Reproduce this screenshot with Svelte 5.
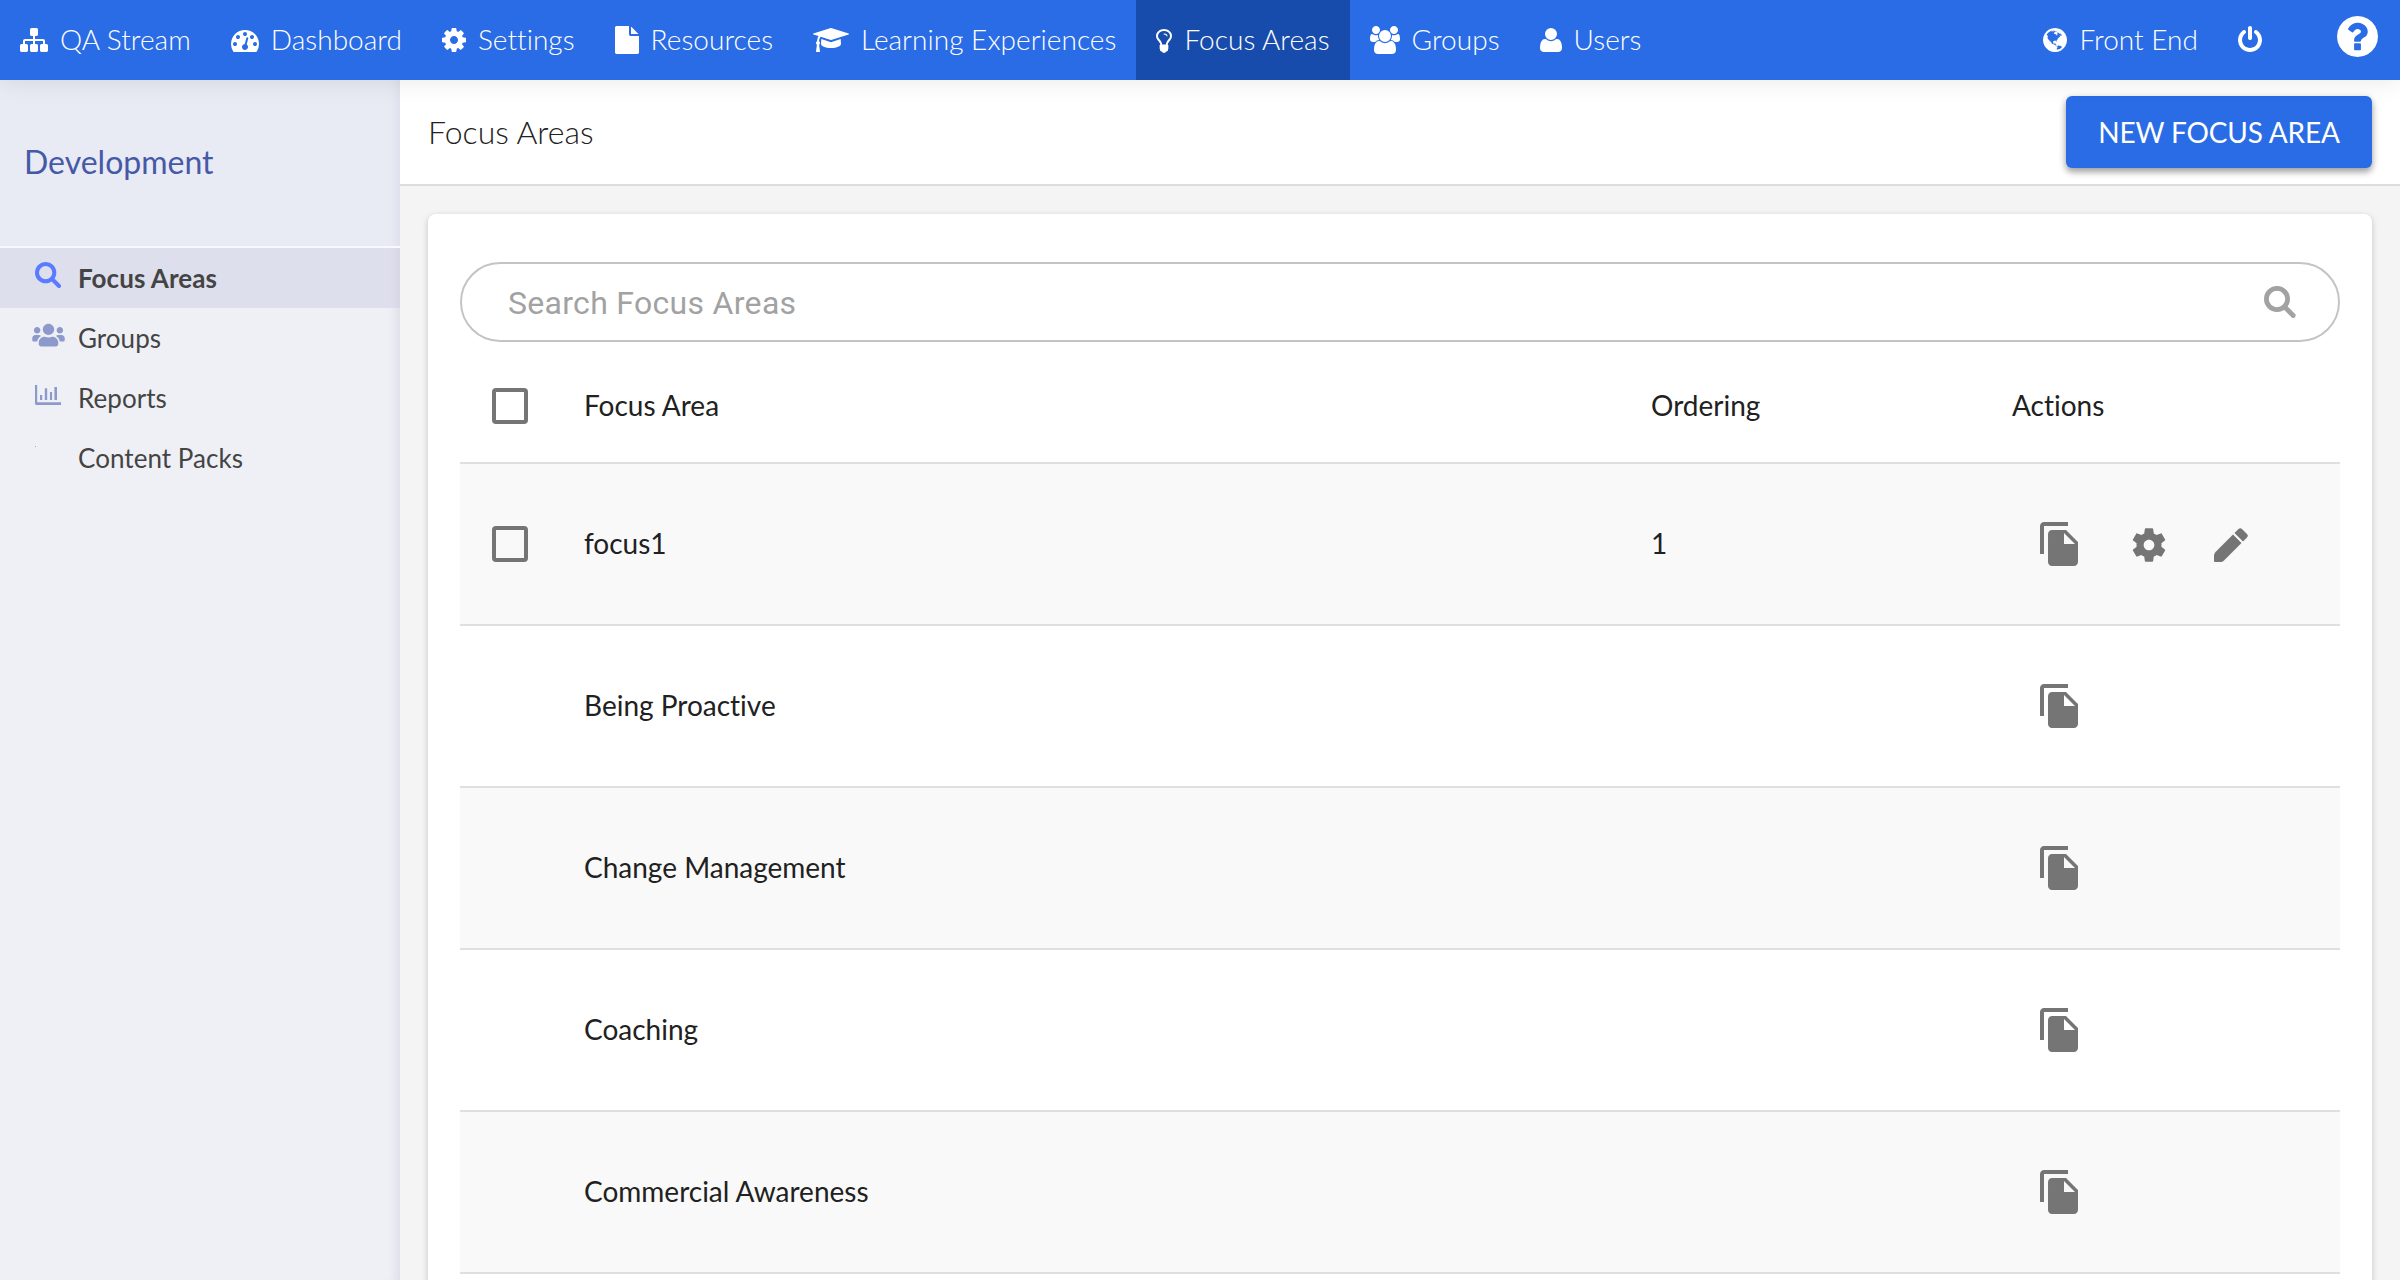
<script>
  const nav = [
    { label: 'QA Stream', icon: 'sitemap' },
    { label: 'Dashboard', icon: 'dashboard' },
    { label: 'Settings', icon: 'cog' },
    { label: 'Resources', icon: 'file' },
    { label: 'Learning Experiences', icon: 'cap' },
    { label: 'Focus Areas', icon: 'bulb', active: true },
    { label: 'Groups', icon: 'users' },
    { label: 'Users', icon: 'user' },
  ];

  // Each icon: viewBox, drawn width and height, path data; `stroke` marks outline icons and gives their line width
  const icons = {
    sitemap: { box: '0 0 1792 1792', w: 28, h: 28, d: 'M1792 1248v320q0 40-28 68t-68 28h-320q-40 0-68-28t-28-68v-320q0-40 28-68t68-28h96v-192h-512v192h96q40 0 68 28t28 68v320q0 40-28 68t-68 28h-320q-40 0-68-28t-28-68v-320q0-40 28-68t68-28h96v-192h-512v192h96q40 0 68 28t28 68v320q0 40-28 68t-68 28h-320q-40 0-68-28t-28-68v-320q0-40 28-68t68-28h96v-192q0-52 38-90t90-38h512v-192h-96q-40 0-68-28t-28-68v-320q0-40 28-68t68-28h320q40 0 68 28t28 68v320q0 40-28 68t-68 28h-96v192h512q52 0 90 38t38 90v192h96q40 0 68 28t28 68z' },
    dashboard: { box: '0 0 1792 1792', w: 28, h: 28, d: 'M384 1152q0-53-37.5-90.5t-90.5-37.5-90.5 37.5-37.5 90.5 37.5 90.5 90.5 37.5 90.5-37.5 37.5-90.5zm192-448q0-53-37.5-90.5t-90.5-37.5-90.5 37.5-37.5 90.5 37.5 90.5 90.5 37.5 90.5-37.5 37.5-90.5zm428 481l101-382q6-26-7.5-48.5t-38.5-29.5-48 6.5-30 39.5l-101 382q-60 5-107 43.5t-63 98.5q-20 77 20 146t117 89 146-20 89-117q16-60-6-117t-72-91zm660-33q0-53-37.5-90.5t-90.5-37.5-90.5 37.5-37.5 90.5 37.5 90.5 90.5 37.5 90.5-37.5 37.5-90.5zm-640-640q0-53-37.5-90.5t-90.5-37.5-90.5 37.5-37.5 90.5 37.5 90.5 90.5 37.5 90.5-37.5 37.5-90.5zm448 192q0-53-37.5-90.5t-90.5-37.5-90.5 37.5-37.5 90.5 37.5 90.5 90.5 37.5 90.5-37.5 37.5-90.5zm320 448q0 261-141 483-19 29-54 29h-1402q-35 0-54-29-141-221-141-483 0-182 71-348t191-286 286-191 348-71 348 71 286 191 191 286 71 348z' },
    cog: { box: '128 0 1536 1792', w: 24, h: 28, d: 'M1152 896q0-106-75-181t-181-75-181 75-75 181 75 181 181 75 181-75 75-181zm512-109v222q0 12-8 23t-20 13l-185 28q-19 54-39 91 35 50 107 138 10 12 10 25t-9 23q-27 37-99 108t-94 71q-12 0-26-9l-138-108q-44 23-91 38-16 136-29 186-7 28-36 28h-222q-14 0-24.5-8.5t-11.5-21.5l-28-184q-49-16-90-37l-141 107q-10 9-25 9-14 0-25-11-126-114-165-168-7-10-7-23 0-12 8-23 15-21 51-66.5t54-70.5q-27-50-41-99l-183-27q-13-2-21-12.5t-8-23.5v-222q0-12 8-23t19-13l186-28q14-46 39-92-40-57-107-138-10-12-10-24 0-10 9-23 26-36 98.5-107.5t94.5-71.5q13 0 26 10l138 107q44-23 91-38 16-136 29-186 7-28 36-28h222q14 0 24.5 8.5t11.5 21.5l28 184q49 16 90 37l142-107q9-9 24-9 13 0 25 10 129 119 165 170 7 8 7 22 0 12-8 23-15 21-51 66.5t-54 70.5q26 50 41 98l183 28q13 2 21 12.5t8 23.5z' },
    file: { box: '128 0 1536 1792', w: 24, h: 28, d: 'M1152 512v-472q22 14 36 28l408 408q14 14 28 36h-472zm-128 32q0 40 28 68t68 28h544v1056q0 40-28 68t-68 28h-1344q-40 0-68-28t-28-68v-1600q0-40 28-68t68-28h800v544z' },
    cap: { box: '0 0 2304 1792', w: 36, h: 28, d: 'M1774 836l18 316q4 69-82 128t-235 93.5-323 34.5-323-34.5-235-93.5-82-128l18-316 574 181q22 7 48 7t48-7zm530-324q0 23-22 31l-1120 352q-4 1-10 1t-10-1l-652-206q-43 34-71 111.5t-34 178.5q63 36 63 109 0 69-58 107l58 433q2 14-8 25-9 11-24 11h-192q-15 0-24-11-10-11-8-25l58-433q-58-38-58-107 0-73 65-111 11-207 98-330l-333-104q-22-8-22-31t22-31l1120-352q4-1 10-1t10 1l1120 352q22 8 22 31z' },
    bulb: { box: '384 0 1024 1792', w: 16, h: 28, d: 'M1120 640q0 13-9.5 22.5t-22.5 9.5-22.5-9.5-9.5-22.5q0-46-54-71t-106-25q-13 0-22.5-9.5t-9.5-22.5 9.5-22.5 22.5-9.5q50 0 99.5 16t87 54 37.5 90zm160 0q0-72-34.5-134t-90-101.5-123-62-136.5-22.5-136.5 22.5-123 62-90 101.5-34.5 134q0 101 68 180 10 11 30.5 33t30.5 33q128 153 141 298h228q13-145 141-298 10-11 30.5-33t30.5-33q68-79 68-180zm128 0q0 155-103 268-45 49-74.5 87t-59.5 95.5-34 107.5q47 28 47 82 0 37-25 64 25 27 25 64 0 52-45 81 13 23 13 47 0 46-31.5 71t-77.5 25q-20 44-60 70t-87 26-87-26-60-70q-46 0-77.5-25t-31.5-71q0-24 13-47-45-29-45-81 0-37 25-64-25-27-25-64 0-54 47-82-4-50-34-107.5t-59.5-95.5-74.5-87q-103-113-103-268 0-99 44.5-184.5t117-142 164-89 186.5-32.5 186.5 32.5 164 89 117 142 44.5 184.5z' },
    users: { box: '0 0 1920 1792', w: 30, h: 28, d: 'M593 896q-162 5-265 128h-134q-82 0-138-40.5t-56-118.5q0-353 124-353 6 0 43.5 21t97.5 42.5 119 21.5q67 0 133-23-5 37-5 66 0 139 81 256zm1071 637q0 120-73 189.5t-194 69.5h-874q-121 0-194-69.5t-73-189.5q0-53 3.5-103.5t14-109 26.5-108.5 43-97.5 62-81 85.5-53.5 111.5-20q10 0 43 21.5t73 48 107 48 135 21.5 135-21.5 107-48 73-48 43-21.5q61 0 111.5 20t85.5 53.5 62 81 43 97.5 26.5 108.5 14 109 3.5 103.5zm-1024-1277q0 106-75 181t-181 75-181-75-75-181 75-181 181-75 181 75 75 181zm704 384q0 159-112.5 271.5t-271.5 112.5-271.5-112.5-112.5-271.5 112.5-271.5 271.5-112.5 271.5 112.5 112.5 271.5zm576 225q0 78-56 118.5t-138 40.5h-134q-103-123-265-128 81-117 81-256 0-29-5-66 66 23 133 23 59 0 119-21.5t97.5-42.5 43.5-21q124 0 124 353zm-128-609q0 106-75 181t-181 75-181-75-75-181 75-181 181-75 181 75 75 181z' },
    user: { box: '192 128 1408 1792', w: 22, h: 28, d: 'M1600 1533q0 120-73 189.500t-194 69.500h-874q-121 0-194-69.500t-73-189.500q0-53 3.500-103.500t14-109 26.500-108.500 43-97.500 62-81 85.500-53.500 111.500-20q10 0 43 21.500t73 48 107 48 135 21.500 135-21.500 107-48 73-48 43-21.500q61 0 111.500 20t85.500 53.500 62 81 43 97.500 26.500 108.500 14 109 3.500 103.500zm-320-893q0 159-112.500 271.500t-271.500 112.500-271.500-112.500-112.500-271.500 112.500-271.500 271.500-112.500 271.500 112.500 112.500 271.500z' },
    globe: { box: '128 0 1536 1792', w: 24, h: 28, d: 'M896 128q209 0 385.5 103t279.5 279.5 103 385.5-103 385.5-279.5 279.5-385.5 103-385.5-103-279.5-279.5-103-385.5 103-385.5 279.5-279.5 385.5-103zm274 521q-2 1-9.5 9.5t-13.5 9.5q2 0 4.5-5t5-11 3.5-7q6-7 22-15 14-6 52-12 34-8 51 11-2-2 9.5-13t14.5-12q3-2 15-4.5t15-7.5l2-22q-12 1-17.5-7t-6.5-21q0 2-6 8 0-7-4.5-8t-11.5 1-9 1q-10-3-15-7.5t-8-16.5-4-15q-2-5-9.5-11t-9.5-10q-1-2-2.5-5.5t-3-6.5-4-5.5-5.5-2.5-7 5-7.5 10-4.5 5q-3-2-6-1.5t-4.5 1-4.5 3-5 3.5q-3 2-8.5 3t-8.5 2q15-5-1-11-10-4-16-3 9-4 7.5-12t-8.5-14h5q-1-4-8.5-8.5t-17.5-8.5-13-6q-8-5-34-9.5t-33-.5q-5 6-4.5 10.5t4 14 3.5 12.5q1 6-5.5 13t-6.5 12q0 7 14 15.5t10 21.5q-3 8-16 16t-16 12q-5 8-1.5 18.5t10.5 16.5q2 2 1.5 4t-3.5 4.5-5.5 4-6.5 3.5l-3 2q-11 5-20.5-6t-13.5-26q-7-25-16-30-23-8-29 1-5-13-41-26-25-9-58-4 6-1 0-15-7-15-19-12 3-6 4-17.5t1-13.5q3-13 12-23 1-1 7-8.5t9.5-13.5.5-6q35 4 50-11 5-5 11.5-17t10.5-17q9-6 14-5.5t14.5 5.5 14.5 5q14 1 15.5-11t-7.5-20q12 1 3-17-4-7-8-9-12-4-27 5-8 4 2 8-1-1-9.5 10.5t-16.5 17.5-16-5q-1-1-5.5-13.5t-9.5-13.5q-8 0-16 15 3-8-11-15t-24-8q19-12-8-27-7-4-20.5-5t-19.5 4q-5 7-5.5 11.5t5 8 10.5 5.5 11.5 4 8.5 3q14 10 8 14-2 1-8.5 3.5t-11.5 4.5-6 4q-3 4 0 14t-2 14q-5-5-9-17.5t-7-16.5q7 9-25 6l-10-1q-4 0-16 2t-20.5 1-13.5-8q-4-8 0-20 1-4 4-2-4-3-11-9.5t-10-8.5q-46 15-94 41 6 1 12-1 5-2 13-6.5t10-5.5q34-14 42-7l5-5q14 16 20 25-7-4-30-1-20 6-22 12 7 12 5 18-4-3-11.5-10t-14.5-11-15-5q-16 0-22 1-146 80-235 222 7 7 12 8 4 1 5 9t2.5 11 11.5-3q9 8 3 19 1-1 44 27 19 17 21 21 3 11-10 18-1-2-9-9t-9-4q-3 5 .5 18.5t10.5 12.5q-7 0-9.5 16t-2.5 35.5-1 23.5l2 1q-3 12 5.5 34.5t21.5 19.5q-13 3 20 43 6 8 8 9 3 2 12 7.5t15 10 10 10.5q4 5 10 22.5t14 23.5q-2 6 9.5 20t10.5 23q-1 0-2.5 1t-2.5 1q3 7 15.5 14t15.5 13q1 3 2 10t3 11 8 2q2-20-24-62-15-25-17-29-3-5-5.5-15.5t-4.5-14.5q2 0 6 1.5t8.5 3.5 7.5 4 2 3q-3 7 2 17.5t12 18.5 17 19 12 13q6 6 14 19.5t0 13.5q9 0 20 10.5t17 19.5q5 8 8 26t5 24q2 7 8.5 13.5t12.5 9.5l16 8 13 7q5 2 18.5 10.5t21.5 11.5q10 4 16 4t14.5-2.5 13.5-3.5q15-2 29 15t21 21q36 19 55 11-2 1 .5 7.5t8 15.5 9 14.5 5.5 8.5q5 6 18 15t18 15q6-4 7-9-3 8 7 20t18 10q14-3 14-32-31 15-49-18 0-1-2.5-5.5t-4-8.5-2.5-8.5 0-7.5 5-3q9 0 10-3.5t-2-12.5-4-13q-1-8-11-20t-12-15q-5 9-16 8t-16-9q0 1-1.5 5.5t-1.5 6.5q-13 0-15-1 1-3 2.5-17.5t3.5-22.5q1-4 5.5-12t7.5-14.5 4-12.5-4.5-9.5-17.5-2.5q-19 1-26 20-1 3-3 10.5t-5 11.5-9 7q-7 3-24 2t-24-5q-13-8-22.5-29t-9.5-37q0-10 2.5-26.5t3-25-5.5-24.5q3-2 9-9.5t10-10.5q2-1 4.5-1.5t4.5 0 4-1.5 3-6q-1-1-4-3-3-3-4-3 7 3 28.5-1.5t27.5 1.5q15 11 22-2 0-1-2.5-9.5t-.5-13.5q5 27 29 9 3 3 15.5 5t17.5 5q3 2 7 5.5t5.5 4.5 5-.5 8.5-6.5q10 14 12 24 11 40 19 44 7 3 11 2t4.5-9.5 0-14-1.5-12.5l-1-8v-18l-1-8q-15-3-18.5-12t1.5-18.5 15-18.5q1-1 8-3.5t15.5-6.5 12.5-8q21-19 15-35 7 0 11-9-1 0-5-3t-7.5-5-4.5-2q9-5 2-16 5-3 7.5-11t7.5-10q9 12 21 2 7-8 1-16 5-7 20.5-10.5t18.5-9.5q7 2 8-2t1-12 3-12q4-5 15-9t13-5l17-11q3-4 0-4 18 2 31-11 10-11-6-20 3-6-3-9.5t-15-5.5q3-1 11.5-.5t10.5-1.5q15-10-7-16-17-5-43 12zm-163 877q206-36 351-189-3-3-12.5-4.5t-12.5-3.5q-18-7-24-8 1-7-2.5-13t-8-9-12.5-8-11-7q-2-2-7-6t-7-5.5-7.5-4.5-8.5-2-10 1l-3 1q-3 1-5.5 2.5t-5.5 3-4 3 0 2.5q-21-17-36-22-5-1-11-5.5t-10.5-7-10-1.5-11.5 7q-5 5-6 15t-2 13q-7-5 0-17.5t2-18.5q-3-6-10.5-4.5t-12 4.5-11.5 8.5-9 6.5-8.5 5.5-8.5 7.5q-3 4-6 12t-5 11q-2-4-11.5-6.5t-9.5-5.5q2 10 4 35t5 38q7 31-12 48-27 25-29 40-4 22 12 26 0 7-8 20.5t-7 21.5q0 6 2 16z' },
    power: { box: '128 0 1536 1792', w: 24, h: 28, d: 'M1664 896q0 156-61 298t-164 245-245 164-298 61-298-61-245-164-164-245-61-298q0-182 80.5-343t226.5-270q43-32 95.5-25t83.5 50q32 42 24.5 94.5t-49.5 84.5q-98 74-151.5 181t-53.5 228q0 104 40.5 198.5t109.5 163.5 163.5 109.5 198.5 40.5 198.5-40.5 163.5-109.5 109.5-163.5 40.5-198.5q0-121-53.5-228t-151.5-181q-42-32-49.5-84.5t24.5-94.5q31-43 84-50t95 25q146 109 226.5 270t80.5 343zm-640-768v640q0 52-38 90t-90 38-90-38-38-90v-640q0-52 38-90t90-38 90 38 38 90z' },
    help: { box: '128 128 1536 1536', w: 41, h: 41, d: 'M1024 1376v-192q0-14-9-23t-23-9h-192q-14 0-23 9t-9 23v192q0 14 9 23t23 9h192q14 0 23-9t9-23zm256-672q0-88-55.5-163t-138.5-116-170-41q-243 0-371 213-15 24 8 42l132 100q7 6 19 6 16 0 25-12 53-68 86-92 34-24 86-24 48 0 85.5 26t37.5 59q0 38-20 61t-68 45q-63 28-115.5 86.5t-52.5 125.5v36q0 14 9 23t23 9h192q14 0 23-9t9-23q0-19 21.5-49.5t54.5-49.5q32-18 49-28.5t46-35 44.5-48 28-60.5 12.5-81zm384 192q0 209-103 385.5t-279.5 279.5-385.5 103-385.5-103-279.5-279.5-103-385.5 103-385.5 279.5-279.5 385.5-103 385.5 103 279.5 279.5 103 385.5z' },
    sideSearch: { box: '0 0 26 26', w: 26, h: 26, stroke: 4, d: 'M19.300 10.650a8.650 8.650 0 1 1-17.300 0a8.650 8.650 0 1 1 17.300 0zM17 17L24 24' },
    sideGroups: { box: '0 0 640 512', w: 33, h: 26, d: 'M96 224c35.3 0 64-28.7 64-64s-28.7-64-64-64-64 28.7-64 64 28.7 64 64 64zm448 0c35.3 0 64-28.7 64-64s-28.7-64-64-64-64 28.7-64 64 28.7 64 64 64zm32 32h-64c-17.6 0-33.5 7.1-45.1 18.6 40.3 22.1 68.9 62 75.1 109.4h66c17.7 0 32-14.3 32-32v-32c0-35.3-28.7-64-64-64zm-256 0c61.9 0 112-50.1 112-112S381.9 32 320 32 208 82.1 208 144s50.1 112 112 112zm76.8 32h-8.3c-20.8 10-43.9 16-68.5 16s-47.6-6-68.5-16h-8.3C179.600 288 128 339.600 128 403.200V432c0 26.500 21.500 48 48 48h288c26.500 0 48-21.500 48-48v-28.800c0-63.600-51.600-115.200-115.200-115.200zm-223.700-13.400C161.500 263.100 145.600 256 128 256H64c-35.300 0-64 28.700-64 64v32c0 17.700 14.300 32 32 32h65.900c6.300-47.400 34.900-87.300 75.200-109.400z' },
    sideReports: { box: '0 0 26 26', w: 26, h: 26, d: 'M0 3h2.200v17.300h23.800V23H1.500Q0 23 0 21.500zM5 13h2.200v5H5zM9.800 6.300h2.400V18h-2.400zM14.900 10h2.200v8h-2.200zM19.400 5h2.600v13h-2.600z' },
    search: { box: '0 0 32 32', w: 32, h: 32, stroke: 4.8, d: 'M23.600 13a10.600 10.600 0 1 1-21.200 0a10.600 10.600 0 1 1 21.200 0zM21.500 21.800L29.200 29.500' },
    copy: { box: '0 0 24 24', w: 48, h: 48, d: 'M16 1H4c-1.1 0-2 .9-2 2v14h2V3h12V1zm-1 4l6 6v10c0 1.1-.9 2-2 2H7.990C6.890 23 6 22.100 6 21l.01-14c0-1.1.89-2 1.990-2h7zm-1 7h5.500L14 6.500V12z' },
    gear: { box: '0 0 24 24', w: 40, h: 40, d: 'M19.430 12.980c.04-.32.07-.64.07-.98s-.03-.66-.07-.98l2.110-1.650c.19-.15.24-.42.12-.64l-2-3.460c-.12-.22-.39-.3-.61-.22l-2.490 1c-.52-.4-1.080-.73-1.690-.98l-.38-2.650C14.460 2.180 14.250 2 14 2h-4c-.25 0-.46.18-.49.42l-.38 2.650c-.61.25-1.170.59-1.690.98l-2.490-1c-.23-.09-.49 0-.61.22l-2 3.460c-.13.22-.07.49.12.64l2.110 1.650c-.04.32-.07.65-.07.98s.03.66.07.98l-2.110 1.650c-.19.15-.24.42-.12.64l2 3.460c.12.22.39.3.61.22l2.490-1c.52.4 1.080.73 1.690.98l.38 2.650c.03.24.24.42.49.42h4c.25 0 .46-.18.49-.42l.38-2.650c.61-.25 1.170-.59 1.690-.98l2.490 1c.23.09.49 0 .61-.22l2-3.460c.12-.22.07-.49-.12-.64l-2.110-1.650zM12 15.200c-1.770 0-3.200-1.430-3.200-3.200s1.430-3.200 3.200-3.200 3.200 1.430 3.200 3.200-1.430 3.200-3.200 3.200z' },
    pencil: { box: '0 0 34 34', w: 34, h: 34, d: 'M19 6.500L27.500 15 10 32.500Q8.500 34 6.500 34H1Q0 34 0 33V27.500Q0 25.500 1.500 24zM20.500 5L24.500 1Q26.300-.5 28 1L33 6Q34.700 7.800 33 9.500L29 13.500z' },
  };

  const side = [
    { label: 'Focus Areas', icon: 'sideSearch', active: true },
    { label: 'Groups', icon: 'sideGroups' },
    { label: 'Reports', icon: 'sideReports' },
    { label: 'Content Packs', icon: '' },
  ];

  const rows = [
    { name: 'focus1', order: '1', own: true },
    { name: 'Being Proactive' },
    { name: 'Change Management' },
    { name: 'Coaching' },
    { name: 'Commercial Awareness' },
    { name: '' },
  ];
</script>

{#snippet icon(name)}
  <svg class="icon" class:outline={icons[name].stroke} viewBox={icons[name].box} width={icons[name].w} height={icons[name].h} stroke-width={icons[name].stroke} aria-hidden="true"><path d={icons[name].d} /></svg>
{/snippet}

<div class="app">
  <header class="topbar">
    {#each nav as item}
      <a class="nav-item" class:active={item.active}>{@render icon(item.icon)}<span>{item.label}</span></a>
    {/each}
    <div class="right">
      <a class="nav-item">{@render icon('globe')}<span>Front End</span></a>
      <a class="nav-item power">{@render icon('power')}</a>
      <a class="help">{@render icon('help')}</a>
    </div>
  </header>

  <div class="body">
    <aside class="sidebar">
      <div class="side-title">Development</div>
      <nav>
        {#each side as item}
          <a class="side-item" class:active={item.active}>
            <span class="side-icon">{#if item.icon}{@render icon(item.icon)}{:else}<i class="dot"></i>{/if}</span>
            <span>{item.label}</span>
          </a>
        {/each}
      </nav>
    </aside>

    <main>
      <div class="page-head">
        <h1>Focus Areas</h1>
        <button class="primary">NEW FOCUS AREA</button>
      </div>
      <section class="card">
        <div class="search">
          <span>Search Focus Areas</span>
          {@render icon('search')}
        </div>
        <div class="row head">
          <span class="check"></span>
          <span>Focus Area</span>
          <span>Ordering</span>
          <span>Actions</span>
        </div>
        {#each rows as row, i}
          <div class="row" class:odd={i % 2 === 0}>
            {#if row.own}<span class="check"></span>{:else}<span></span>{/if}
            <span class="cell">{row.name}</span>
            <span class="cell">{row.order ?? ''}</span>
            <span class="actions">
              {@render icon('copy')}
              {#if row.own}
                {@render icon('gear')}
                {@render icon('pencil')}
              {/if}
            </span>
          </div>
        {/each}
      </section>
    </main>
  </div>
</div>

<style>
  :global(body) { margin: 0; overflow: hidden; }
  .app { width: 2400px; height: 1280px; overflow: hidden; display: flex; flex-direction: column; font-family: Lato, sans-serif; font-variant-ligatures: none; background: #f4f4f4; }
  .icon { display: block; flex: none; fill: currentColor; }
  .icon.outline { fill: none; stroke: currentColor; stroke-linecap: round; }
  .topbar { position: relative; z-index: 3; flex: none; height: 80px; display: flex; background: #2a6ce6; color: #fff; box-shadow: 0 0 24px rgba(0, 0, 0, 0.1); }
  .nav-item { display: flex; align-items: center; gap: 12px; padding: 0 20px; font-size: 28px; font-weight: 300; letter-spacing: 0.03px; white-space: nowrap; }
  .nav-item span { padding-bottom: 2px; }
  .nav-item.active { background: #184cac; }
  .right { display: flex; margin-left: auto; padding-right: 22px; }
  .power { margin-right: 55px; }
  .help { padding-top: 16px; }
  .body { flex: 1; min-height: 0; display: flex; }
  .sidebar { width: 400px; flex: none; background: #eff0f5; color: #444; box-shadow: inset -12px 0 12px -10px rgba(40, 50, 90, 0.12); }
  .side-title { height: 168px; box-sizing: border-box; display: flex; align-items: center; padding: 0 24px 4px; font-size: 32px; color: #4659a7; background: rgba(220, 226, 242, 0.38); border-bottom: 2px solid #f8f9fc; }
  .side-item { height: 60px; display: flex; align-items: center; font-size: 26px; letter-spacing: 0.05px; }
  .side-item.active { background: rgba(205, 205, 228, 0.5); font-weight: 700; }
  .side-icon { width: 46px; height: 32px; margin: -6px 7px 0 25px; display: flex; align-items: center; justify-content: center; color: #8e99cb; }
  .active .side-icon { color: #5a7bff; }
  .dot { width: 1px; height: 1px; background: #aaa; margin: -18px 0 0 -25px; }
  main { flex: 1; min-width: 0; display: flex; flex-direction: column; }
  .page-head { flex: none; height: 106px; box-sizing: border-box; padding: 0 28px; display: flex; align-items: center; justify-content: space-between; background: #fff; border-bottom: 2px solid #ddd; }
  h1 { margin: 0; padding-bottom: 2px; font-size: 32px; font-weight: 300; color: #222; }
  .primary { width: 306px; height: 72px; border: 0; border-radius: 6px; padding: 0; background: #2a6ce6; color: #fff; font: 400 28px Lato, sans-serif; letter-spacing: -0.15px; box-shadow: 0 4px 6px rgba(0, 0, 0, 0.3), 0 2px 10px rgba(0, 0, 0, 0.14); }
  .card { flex: none; height: 1200px; box-sizing: border-box; margin: 28px 28px 0; padding: 48px 32px; border-radius: 8px; background: #fff; box-shadow: 0 2px 6px rgba(0, 0, 0, 0.2); }
  .search { height: 80px; box-sizing: border-box; border: 2px solid #c4c4c4; border-radius: 40px; padding: 0 42px 0 46px; display: flex; align-items: center; justify-content: space-between; font: 400 32px Roboto, sans-serif; letter-spacing: 0.3px; color: #a2a2a2; }
  .search span { padding-top: 2px; }
  .row { height: 162px; box-sizing: border-box; border-top: 2px solid #dfdfdf; display: grid; grid-template-columns: 124px 1067px 361px 1fr; align-items: center; font-size: 28px; color: #212121; }
  .row.head { height: 120px; border: 0; padding-top: 6px; }
  .row.odd { background: #f9f9f9; }
  .cell { padding-bottom: 2px; }
  .check { width: 36px; height: 36px; box-sizing: border-box; margin-left: 32px; border: 4px solid #757575; border-radius: 4px; }
  .head .check { margin-top: 2px; }
  .actions { display: flex; align-items: center; padding-left: 24px; color: #757575; }
  .actions :global(svg:nth-child(2)) { margin: 2px 0 0 45px; }
  .actions :global(svg:nth-child(3)) { margin: 2px 0 0 45px; }
</style>
